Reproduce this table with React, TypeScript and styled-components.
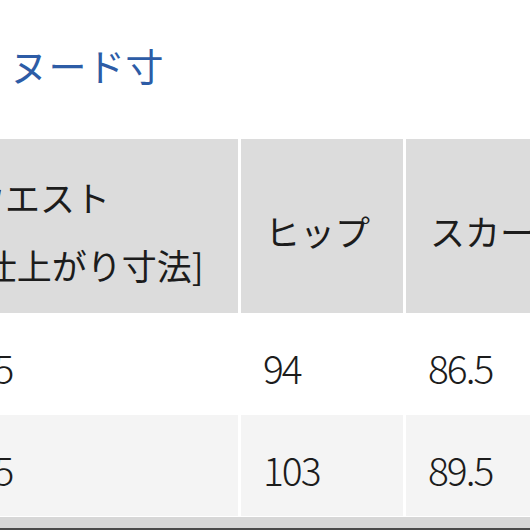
import React from "react";
import styled, { createGlobalStyle } from "styled-components";

const Global = createGlobalStyle`
  html, body { margin: 0; padding: 0; background: #ffffff; }
  body { overflow: hidden; }
`;

const Page = styled.div`
  width: 530px;
  height: 530px;
  overflow: hidden;
  background: #ffffff;
  font-family: "Noto Sans CJK JP", "Noto Sans", sans-serif;
`;

const Title = styled.h2`
  margin: 0;
  height: 139px;
  box-sizing: border-box;
  padding: 42px 0 0 10px;
  font-size: 38px;
  font-weight: 400;
  line-height: 46px;
  letter-spacing: 0.5px;
  color: #2d5ca6;
  white-space: nowrap;
`;

const Table = styled.div`
  display: grid;
  grid-template-columns: 292px 162px 162px;
  grid-template-rows: 174px 100px 101px 11px;
  column-gap: 3px;
  row-gap: 1px;
  margin-left: -54px;
  width: 622px;
  background: #ffffff;
`;

const Cell = styled.div<{ $kind: "head" | "odd" | "even"; $pad?: number }>`
  display: flex;
  flex-direction: column;
  justify-content: center;
  box-sizing: border-box;
  padding-left: ${(p) => (p.$pad ?? 24)}px;
  padding-top: ${(p) => (p.$kind === "head" ? 9 : 6)}px;
  white-space: nowrap;
  overflow: hidden;
  color: #1c1c1c;
  background: ${(p) => (p.$kind === "head" ? "#dcdcdc" : p.$kind === "even" ? "#f4f4f4" : "#ffffff")};
  font-size: ${(p) => (p.$kind === "head" ? 35 : 39)}px;
  font-weight: ${(p) => (p.$kind === "head" ? 400 : 300)};
  letter-spacing: ${(p) => (p.$kind === "head" ? 0 : -2)}px;
  line-height: ${(p) => (p.$kind === "head" ? 68 : 48)}px;
`;

const FootRow = styled.div`
  grid-column: 1 / -1;
  background: #d7d7d7;
`;

const BottomRule = styled.div`
  height: 2px;
  background: #4a4a4a;
`;

const rows = [
  ["66.5", "94", "86.5"],
  ["72.5", "103", "89.5"],
];

export default function App() {
  return (
    <Page>
      <Global />
      <Title>ヌード寸</Title>
      <Table>
        <Cell $kind="head">
          <span>ウエスト</span>
          <span>[仕上がり寸法]</span>
        </Cell>
        <Cell $kind="head">
          <span>ヒップ</span>
        </Cell>
        <Cell $kind="head">
          <span>スカート丈</span>
        </Cell>
        {rows.map((r, i) => (
          <React.Fragment key={i}>
            {r.map((v, j) => (
              <Cell key={j} $kind={i % 2 === 0 ? "odd" : "even"} $pad={j === 0 ? 2 : 22}>
                <span>{v}</span>
              </Cell>
            ))}
          </React.Fragment>
        ))}
        <FootRow />
      </Table>
      <BottomRule />
    </Page>
  );
}
